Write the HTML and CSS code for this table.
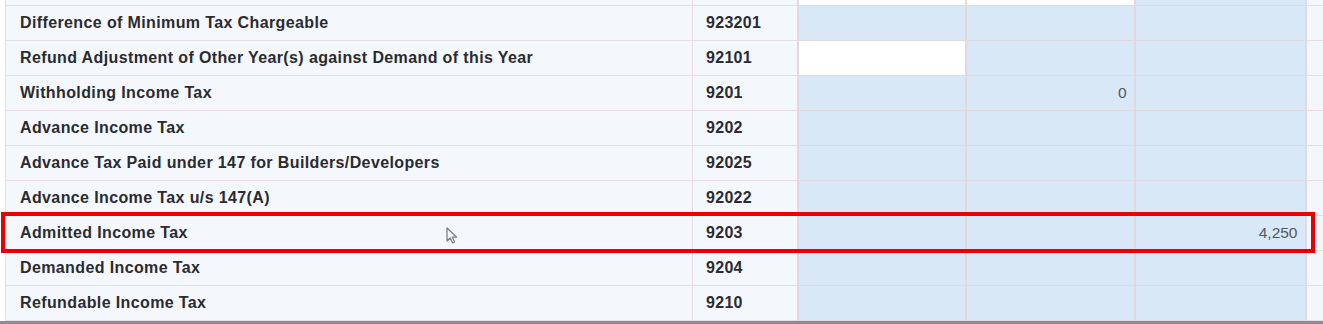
FILE: index.html
```html
<!DOCTYPE html>
<html lang="en">
<head>
<meta charset="utf-8">
<title>Tax Computation</title>
<link rel="stylesheet" href="styles.css">
</head>
<body>
<div class="viewport">
  <div class="sheet">
    <table class="grid">
      <colgroup>
        <col class="c-label"><col class="c-code"><col class="c-in1"><col class="c-in2"><col class="c-in3"><col class="c-fill">
      </colgroup>
      <tbody>
        <tr>
          <td class="label"></td><td class="code"></td>
          <td class="inp blank"></td><td class="inp blank"></td><td class="inp"></td><td class="fill"></td>
        </tr>
        <tr>
          <td class="label">Difference of Minimum Tax Chargeable</td><td class="code">923201</td>
          <td class="inp"></td><td class="inp"></td><td class="inp"></td><td class="fill"></td>
        </tr>
        <tr>
          <td class="label">Refund Adjustment of Other Year(s) against Demand of this Year</td><td class="code">92101</td>
          <td class="inp blank"></td><td class="inp"></td><td class="inp"></td><td class="fill"></td>
        </tr>
        <tr>
          <td class="label">Withholding Income Tax</td><td class="code">9201</td>
          <td class="inp"></td><td class="inp num">0</td><td class="inp"></td><td class="fill"></td>
        </tr>
        <tr>
          <td class="label">Advance Income Tax</td><td class="code">9202</td>
          <td class="inp"></td><td class="inp"></td><td class="inp"></td><td class="fill"></td>
        </tr>
        <tr>
          <td class="label">Advance Tax Paid under 147 for Builders/Developers</td><td class="code">92025</td>
          <td class="inp"></td><td class="inp"></td><td class="inp"></td><td class="fill"></td>
        </tr>
        <tr>
          <td class="label">Advance Income Tax u/s 147(A)</td><td class="code">92022</td>
          <td class="inp"></td><td class="inp"></td><td class="inp"></td><td class="fill"></td>
        </tr>
        <tr>
          <td class="label">Admitted Income Tax</td><td class="code">9203</td>
          <td class="inp"></td><td class="inp"></td><td class="inp num">4,250</td><td class="fill"></td>
        </tr>
        <tr>
          <td class="label">Demanded Income Tax</td><td class="code">9204</td>
          <td class="inp"></td><td class="inp"></td><td class="inp"></td><td class="fill"></td>
        </tr>
        <tr>
          <td class="label">Refundable Income Tax</td><td class="code">9210</td>
          <td class="inp"></td><td class="inp"></td><td class="inp"></td><td class="fill"></td>
        </tr>
      </tbody>
    </table>
    <div class="highlight"></div>
    <svg class="cursor" width="12" height="17" viewBox="0 0 12 17" aria-hidden="true">
      <path d="M1 1 L1 14 L4.2 11 L6.6 16 L8.6 15 L6.3 10.2 L10.6 10.2 Z" fill="#fbfcfe" stroke="#7b7f86" stroke-width="1.3" stroke-linejoin="round"/>
    </svg>
  </div>
  <div class="statusbar"></div>
</div>
</body>
</html>
```
FILE: styles.css
```css
html, body {
  margin: 0;
  padding: 0;
  background: #ffffff;
}

.viewport {
  width: 1323px;
  height: 324px;
  display: flex;
  flex-direction: column;
  overflow: hidden;
}

.sheet {
  position: relative;
  height: 321px;
  overflow: hidden;
  padding-left: 5px;
  background: #ffffff;
}

.grid {
  border-collapse: collapse;
  table-layout: fixed;
  width: 1319px;
  margin-top: -30px;
  font-family: "Liberation Sans", Arial, sans-serif;
}

.c-label { width: 687px; }
.c-code { width: 105px; }
.c-in1 { width: 168px; }
.c-in2 { width: 169px; }
.c-in3 { width: 171px; }
.c-fill { width: 19px; }

.grid tr {
  height: 35px;
}

.grid td {
  border: 1px solid #e8dce1;
  padding: 0;
  white-space: nowrap;
  overflow: hidden;
}

.label {
  background: #f4f8fd;
  padding-left: 14px !important;
  font-size: 16px;
  font-weight: bold;
  color: #2b2b30;
  letter-spacing: 0.38px;
}

.code {
  background: #f4f8fd;
  padding-left: 13px !important;
  font-size: 16px;
  font-weight: bold;
  color: #2b2b30;
  letter-spacing: 0.3px;
}

.inp {
  background: #d8e8f6;
  border-color: #e2d9de !important;
  border-left-width: 2px !important;
  border-right-width: 2px !important;
}

.inp.blank {
  background: #ffffff;
}

.num {
  text-align: right;
  padding-right: 7px !important;
  font-size: 15.5px;
  color: #55575c;
}

.fill {
  background: #f3f7fc;
}

.highlight {
  position: absolute;
  left: 1px;
  top: 212px;
  width: 1306px;
  height: 33px;
  border: 4px solid #ea0000;
}

.cursor {
  position: absolute;
  left: 446px;
  top: 227px;
}

.statusbar {
  height: 3px;
  background: #8a8e93;
}
```
